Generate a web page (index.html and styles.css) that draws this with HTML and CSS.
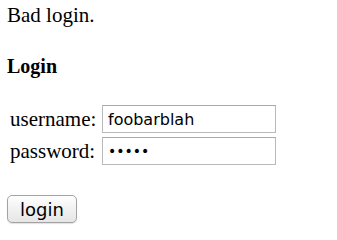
FILE: index.html
```html
<!DOCTYPE html>
<html>
<head>
<meta charset="utf-8">
<link rel="stylesheet" href="styles.css">
</head>
<body>
<p class="msg">Bad login.</p>
<h4 class="title">Login</h4>
<form class="login-form">
<table class="fields">
<tr><td class="label">username:</td><td class="cell"><input class="field" type="text" value="foobarblah"></td></tr>
<tr><td class="label">password:</td><td class="cell"><input class="field secret" type="password" value="fooba"></td></tr>
</table>
<button class="submit" type="submit">login</button>
</form>
</body>
</html>
```

FILE: styles.css
```css
html, body {
  background: #fff;
}
body {
  margin: 0;
  padding: 4px 7px;
  font-family: "Liberation Serif", serif;
  font-size: 21px;
  color: #000;
}
.msg {
  margin: 0;
  line-height: 23px;
}
.title {
  margin: 28px 0 0;
  font-size: 20px;
  font-weight: bold;
  line-height: 23px;
}
.login-form {
  margin: 0;
}
.fields {
  margin-top: 24px;
  border-spacing: 2px;
  border-collapse: separate;
}
.fields td {
  padding: 1px;
  vertical-align: middle;
  line-height: 23px;
}
.label {
  width: 88px;
  white-space: nowrap;
}
.field {
  display: block;
  box-sizing: border-box;
  width: 174px;
  height: 28px;
  margin: 0;
  padding: 0 5px;
  border: 1px solid #b9b9b9;
  border-top-color: #a9a9a9;
  background: #fff;
  font-family: "DejaVu Sans", sans-serif;
  font-size: 16px;
  color: #000;
  outline: none;
}
.secret {
  font-size: 14px;
  letter-spacing: 0;
}
.submit {
  display: block;
  box-sizing: border-box;
  margin-top: 27px;
  width: 70px;
  height: 28px;
  padding: 0;
  border: 1px solid #a3a3a3;
  border-radius: 5px;
  background: linear-gradient(#ffffff, #f1f1f1 50%, #e6e6e6);
  box-shadow: 0 1px 1px rgba(0,0,0,0.12);
  font-family: "DejaVu Sans", sans-serif;
  font-size: 18px;
  color: #000;
}
```
